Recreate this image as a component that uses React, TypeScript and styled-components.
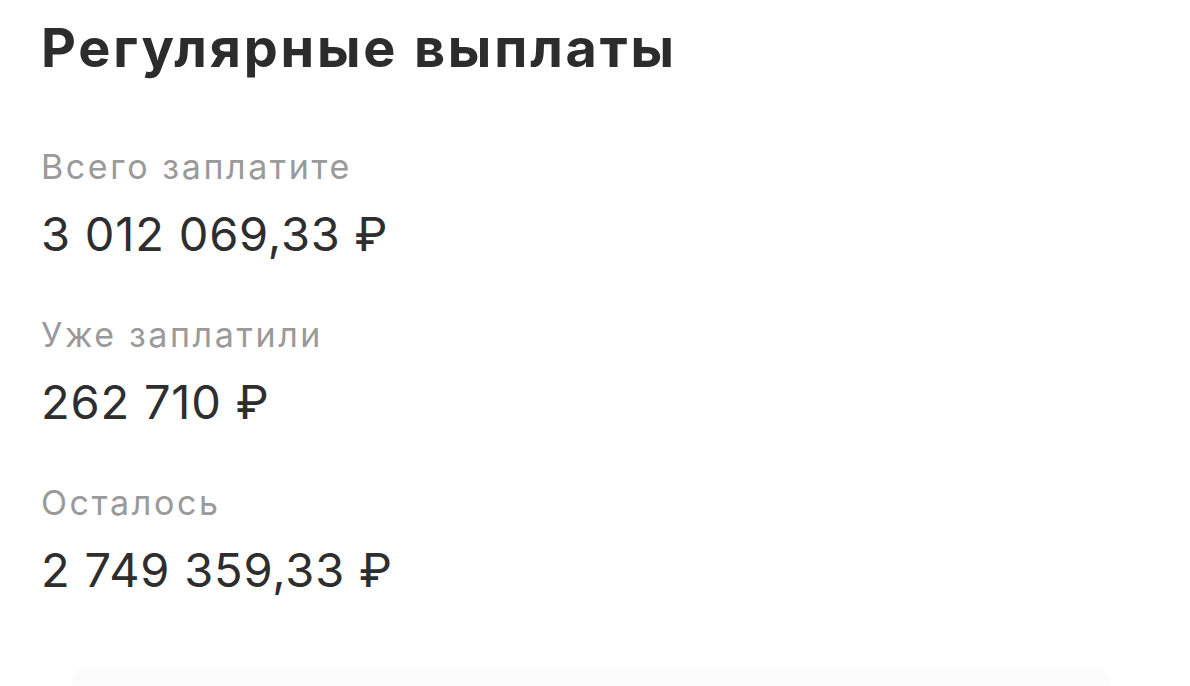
import React from "react";
import styled, { createGlobalStyle } from "styled-components";

type payment = {
  label: string;
  amount: string;
};

const payments: payment[] = [
  { label: "Всего заплатите", amount: "3 012 069,33 ₽" },
  { label: "Уже заплатили", amount: "262 710 ₽" },
  { label: "Осталось", amount: "2 749 359,33 ₽" },
];

const App: React.FC = () => {
  return (
    <>
      <GlobalStyle />
      <Page>
        <Title>Регулярные выплаты</Title>
        <List>
          {payments.map((p) => (
            <Item key={p.label}>
              <Label>{p.label}</Label>
              <Amount>{p.amount}</Amount>
            </Item>
          ))}
        </List>
        <Footer />
      </Page>
    </>
  );
};

export default App;

const GlobalStyle = createGlobalStyle`
  body {
    margin: 0;
    background: #ffffff;
    font-family: Inter, "Noto Sans", sans-serif;
  }
`;

const Page = styled.div`
  width: 1190px;
  height: 686px;
  overflow: hidden;
  display: flex;
  flex-direction: column;
  padding: 18px 0 0 41px;
  box-sizing: border-box;
`;

const Title = styled.h1`
  margin: 0;
  font-family: Inter, "Noto Sans", sans-serif;
  font-weight: 700;
  font-size: 54px;
  line-height: 60px;
  letter-spacing: 2.8px;
  color: #2c2c2c;
`;

const List = styled.div`
  display: flex;
  flex-direction: column;
  gap: 53px;
  margin-top: 69px;
`;

const Item = styled.div`
  display: flex;
  flex-direction: column;
  gap: 19px;
`;

const Label = styled.div`
  font-size: 34px;
  line-height: 40px;
  color: #9a9a9a;
  letter-spacing: 2.6px;
`;

const Amount = styled.div`
  font-size: 47px;
  line-height: 56px;
  color: #2e2e2e;
  letter-spacing: 0.8px;
`;

const Footer = styled.div`
  margin: auto 80px 0 31px;
  height: 18px;
  background: #fcfcfc;
  border-radius: 12px 12px 0 0;
`;
